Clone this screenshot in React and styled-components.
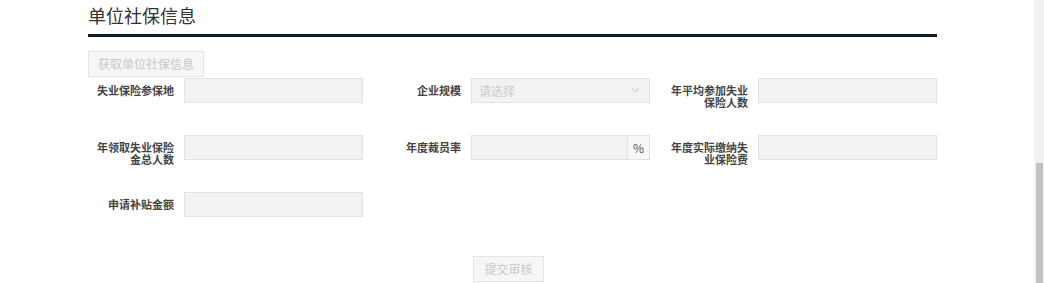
import React from "react";
import styled, { createGlobalStyle } from "styled-components";

const Global = createGlobalStyle`
  html, body { margin: 0; padding: 0; background: #fff; overflow: hidden; }
  body { font-family: "Noto Sans CJK SC", "Noto Sans", sans-serif; }
  * { box-sizing: border-box; }
`;

const Page = styled.div`
  display: flex;
  width: 1044px;
  height: 283px;
`;

const Main = styled.div`
  flex: 1;
  padding-left: 88px;
`;

const Scrollbar = styled.div`
  width: 10px;
  background: #f1f1f1;
  display: flex;
  flex-direction: column;
  align-items: center;
`;

const Thumb = styled.div`
  margin-top: 163px;
  width: 7px;
  flex: 1;
  background: #c1c1c1;
`;

const Section = styled.div`
  width: 849px;
`;

const Title = styled.h2`
  margin: 0;
  padding-top: 3px;
  font-size: 18px;
  line-height: 24px;
  font-weight: 400;
  color: #333;
  border-bottom: 3px solid #0f1c2b;
  height: 37px;
`;

const Button = styled.button`
  height: 26px;
  padding: 0 ${(p) => p.$pad || 10}px;
  font-family: inherit;
  font-size: 12px;
  line-height: 24px;
  color: #c8c8c8;
  background: #f6f6f6;
  border: 1px solid #e4e4e4;
  border-radius: 0;
  cursor: not-allowed;
`;

const Toolbar = styled.div`
  margin-top: 14px;
  display: flex;
`;

const Grid = styled.div`
  margin-top: 1px;
  display: grid;
  grid-template-columns: 275px 277px 277px;
  grid-auto-rows: 25px;
  column-gap: 10px;
  row-gap: 32px;
`;

const Field = styled.div`
  justify-self: end;
  display: flex;
  align-items: flex-start;
  gap: 10px;
  height: 25px;
`;

const Label = styled.label`
  width: 80px;
  padding-top: 6px;
  text-align: right;
  font-size: 11px;
  line-height: 12px;
  font-weight: 700;
  color: #444;
  flex-shrink: 0;
`;

const Control = styled.div`
  width: 179px;
  height: 25px;
  display: flex;
  background: #f2f2f2;
  border: 1px solid #e2e2e2;
`;

const Input = styled.div`
  flex: 1;
  height: 100%;
`;

const Addon = styled.span`
  width: 22px;
  border-left: 1px solid #e2e2e2;
  background: #f8f8f8;
  font-size: 12px;
  line-height: 23px;
  text-align: center;
  color: #555;
`;

const Placeholder = styled.span`
  flex: 1;
  padding-left: 7px;
  font-size: 12px;
  line-height: 23px;
  color: #cbcbcb;
`;

const Chevron = styled.svg`
  margin: 8px 9px 0 0;
`;

const Footer = styled.div`
  margin-top: 39px;
  display: flex;
  justify-content: center;
  padding-right: 8px;
`;

const fields = [
  { label: "失业保险参保地" },
  { label: "企业规模", select: true },
  { label: "年平均参加失业保险人数" },
  { label: "年领取失业保险金总人数" },
  { label: "年度裁员率", unit: "%" },
  { label: "年度实际缴纳失业保险费" },
  { label: "申请补贴金额" },
];

export default function App() {
  return (
    <>
      <Global />
      <Page>
        <Main>
          <Section>
            <Title>单位社保信息</Title>
            <Toolbar>
              <Button $pad={9}>获取单位社保信息</Button>
            </Toolbar>
            <Grid>
              {fields.map((f) => (
                <Field key={f.label}>
                  <Label>{f.label}</Label>
                  <Control>
                    {f.select ? (
                      <>
                        <Placeholder>请选择</Placeholder>
                        <Chevron width="9" height="6" viewBox="0 0 9 6">
                          <path d="M1 1l3.5 3.5L8 1" fill="none" stroke="#c4c4c4" strokeWidth="1" />
                        </Chevron>
                      </>
                    ) : (
                      <Input />
                    )}
                    {f.unit && <Addon>{f.unit}</Addon>}
                  </Control>
                </Field>
              ))}
            </Grid>
            <Footer>
              <Button $pad={10}>提交审核</Button>
            </Footer>
          </Section>
        </Main>
        <Scrollbar>
          <Thumb />
        </Scrollbar>
      </Page>
    </>
  );
}
